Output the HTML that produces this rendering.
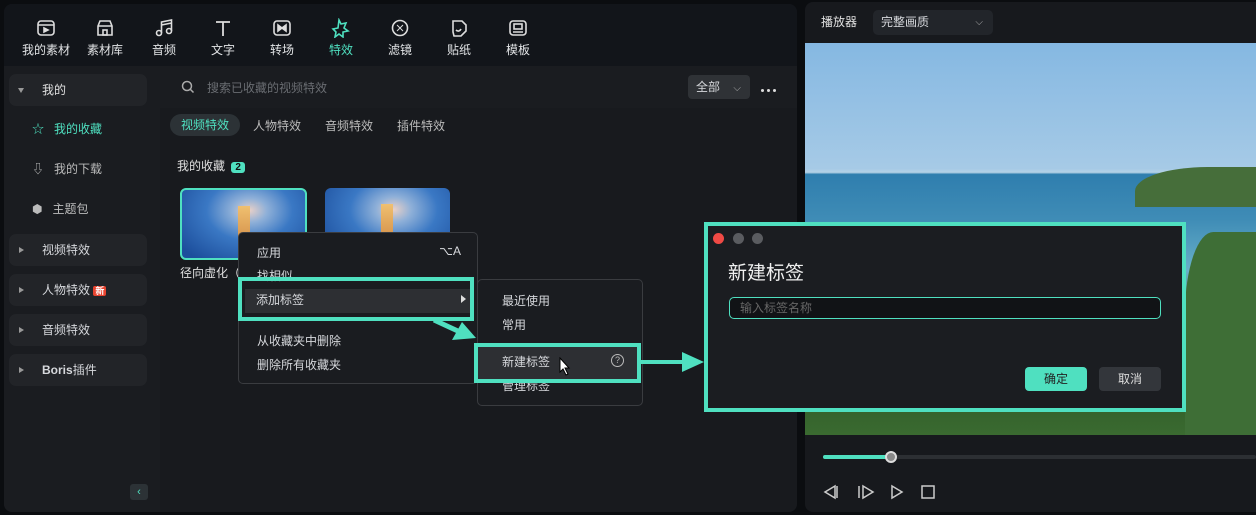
<!DOCTYPE html><html><head><meta charset="utf-8"><style>
*{margin:0;padding:0;box-sizing:border-box}
body{width:1256px;height:515px;background:#0b0d10;font-family:"Liberation Sans","Noto Sans CJK SC",sans-serif;color:#d6d8dc;position:relative;overflow:hidden;font-size:12px}
.abs{position:absolute}
.left{left:4px;top:4px;width:793px;height:508px;background:#181a1e;border-radius:8px;overflow:hidden}
.tb{left:0;top:0;width:793px;height:62px;background:#12151a}
.ti{position:absolute;top:14px;width:60px;text-align:center;font-size:12px;color:#e2e4e6}
.ti svg{display:block;margin:0 auto 3px}
.side{left:0;top:62px;width:156px;height:446px;background:#1a1c20}
.grp{position:absolute;left:5px;width:138px;height:32px;background:#222428;border-radius:7px;font-size:12px;line-height:32px}
.grp .tri{position:absolute;left:10px;top:13px;border-left:5px solid #999;border-top:3px solid transparent;border-bottom:3px solid transparent}
.grp span{position:absolute;left:33px}
.menu{background:#1a1c20;border:1px solid #3a3c40;border-radius:5px}
.hl{border:4px solid #4fe0c0}
.thumb{background:radial-gradient(ellipse at 55% 30%,#e8d0c8 0,#8fb0d8 18%,#3a78c4 45%,#1c4e9c 90%)}
</style></head><body>
<div class="abs left">
 <div class="abs tb">
  <div class="ti" style="left:12px"><svg width="20" height="20" viewBox="0 0 20 20" fill="none" stroke="#ddd" stroke-width="1.6"><rect x="2" y="3" width="16" height="14" rx="3"/><path d="M2 7h16"/><path d="M8 10l4 2-4 2z" fill="#ddd"/></svg>我的素材</div>
  <div class="ti" style="left:71px"><svg width="20" height="20" viewBox="0 0 20 20" fill="none" stroke="#ddd" stroke-width="1.6"><path d="M3 8l2-5h10l2 5v9H3z"/><path d="M3 8h14"/><rect x="8" y="12" width="4" height="5"/></svg>素材库</div>
  <div class="ti" style="left:130px"><svg width="20" height="20" viewBox="0 0 20 20" fill="none" stroke="#ddd" stroke-width="1.6"><circle cx="5" cy="15" r="2.5"/><circle cx="15" cy="13" r="2.5"/><path d="M7.5 15V4l10-2v11M7.5 7l10-2"/></svg>音频</div>
  <div class="ti" style="left:189px"><svg width="20" height="20" viewBox="0 0 20 20" fill="none" stroke="#ddd" stroke-width="1.8"><path d="M3 4h14M10 4v14"/></svg>文字</div>
  <div class="ti" style="left:248px"><svg width="20" height="20" viewBox="0 0 20 20" fill="none" stroke="#ddd" stroke-width="1.6"><rect x="2" y="3" width="16" height="14" rx="3"/><path d="M6 7l4 3-4 3zM14 7l-4 3 4 3z" fill="#ddd"/></svg>转场</div>
  <div class="ti" style="left:307px;color:#4fe0c0"><svg width="20" height="20" viewBox="0 0 20 20" fill="none" stroke="#4fe0c0" stroke-width="1.6"><path d="M8 2l2 4 5-1-2 5 4 3-5 1 0 5-4-3-4 3 1-5-3-3 5-1z"/></svg>特效</div>
  <div class="ti" style="left:366px"><svg width="20" height="20" viewBox="0 0 20 20" fill="none" stroke="#ddd" stroke-width="1.6"><circle cx="10" cy="10" r="7.5"/><path d="M7 7l6 6M13 7l-6 6" stroke-width="1"/></svg>滤镜</div>
  <div class="ti" style="left:425px"><svg width="20" height="20" viewBox="0 0 20 20" fill="none" stroke="#ddd" stroke-width="1.6"><path d="M4 3h9l4 4v6l-5 5H5l-1-4z"/><path d="M7 12c2 2 4 1 5-1"/></svg>贴纸</div>
  <div class="ti" style="left:484px"><svg width="20" height="20" viewBox="0 0 20 20" fill="none" stroke="#ddd" stroke-width="1.6"><rect x="2" y="3" width="16" height="14" rx="3"/><rect x="6" y="6" width="8" height="5"/><path d="M5 14h10"/></svg>模板</div>
 </div>
 <div class="abs side">
  <div class="grp" style="top:8px"><div class="tri" style="border-left:3px solid transparent;border-right:3px solid transparent;border-top:5px solid #999;border-bottom:0;left:9px;top:14px"></div><span style="left:33px;color:#e0e0e0">我的</span></div>
  <div class="abs" style="left:28px;top:54px;color:#4fe0c0;font-size:12px">☆&nbsp;&nbsp;&nbsp;我的收藏</div>
  <div class="abs" style="left:28px;top:94px;color:#bbb">⇩&nbsp;&nbsp;&nbsp;我的下载</div>
  <div class="abs" style="left:28px;top:134px;color:#bbb">⬢&nbsp;&nbsp;&nbsp;主题包</div>
  <div class="grp" style="top:168px"><div class="tri"></div><span>视频特效</span></div>
  <div class="grp" style="top:208px"><div class="tri"></div><span>人物特效 <b style="background:#e8432f;color:#fff;font-size:9px;padding:0 2px;border-radius:2px">新</b></span></div>
  <div class="grp" style="top:248px"><div class="tri"></div><span>音频特效</span></div>
  <div class="grp" style="top:288px"><div class="tri"></div><span style="font-weight:bold">Boris<b style="font-weight:normal">插件</b></span></div>
  <div class="abs" style="left:126px;top:418px;width:18px;height:16px;background:#2c3236;border-radius:3px;color:#4fe0c0;text-align:center;line-height:16px;font-size:11px">‹</div>
 </div>
 <div class="abs" style="left:156px;top:62px;width:637px;height:42px;background:#1a1c20"></div>
 <svg class="abs" style="left:177px;top:76px" width="14" height="14" fill="none" stroke="#aaa" stroke-width="1.5"><circle cx="6" cy="6" r="4.5"/><path d="M9.5 9.5l3 3"/></svg>
 <div class="abs" style="left:203px;top:75px;color:#6a6d72">搜索已收藏的视频特效</div>
 <div class="abs" style="left:684px;top:71px;width:62px;height:24px;background:#2f3236;border-radius:4px;line-height:24px;padding-left:8px">全部 <span style="margin-left:10px;color:#aaa;font-size:10px">⌵</span></div>
 <div class="abs" style="left:757px;top:85px;width:3px;height:3px;background:#ddd;border-radius:50%;box-shadow:6px 0 #ddd,12px 0 #ddd"></div>
 <div class="abs" style="left:166px;top:110px;width:70px;height:22px;background:#2c3236;border-radius:11px;color:#4fe0c0;text-align:center;line-height:22px">视频特效</div>
 <div class="abs" style="left:249px;top:113px;color:#bbb">人物特效</div>
 <div class="abs" style="left:321px;top:113px;color:#bbb">音频特效</div>
 <div class="abs" style="left:393px;top:113px;color:#bbb">插件特效</div>
 <div class="abs" style="left:173px;top:153px;color:#e0e0e0">我的收藏 <span style="background:#4fe0c0;color:#111;font-size:10px;padding:0 4px;border-radius:3px;font-weight:bold;margin-left:3px">2</span></div>
 <div class="abs thumb" style="left:176px;top:184px;width:127px;height:72px;border:2px solid #4fe0c0;border-radius:6px;overflow:hidden"><div style="position:absolute;left:56px;top:16px;width:12px;height:60px;background:linear-gradient(#f0c070,#c07030)"></div></div>
 <div class="abs thumb" style="left:321px;top:184px;width:125px;height:72px;border-radius:6px;overflow:hidden"><div style="position:absolute;left:56px;top:16px;width:12px;height:60px;background:linear-gradient(#f0c070,#c07030)"></div></div>
 <div class="abs" style="left:176px;top:260px;color:#e0e0e0">径向虚化（</div>
</div>
<!-- menu 1 -->
<div class="abs menu" style="left:238px;top:232px;width:240px;height:152px">
 <div class="abs" style="left:18px;top:11px">应用</div><div class="abs" style="right:16px;top:11px">⌥A</div>
 <div class="abs" style="left:18px;top:34px">找相似</div>
 <div class="abs" style="left:6px;top:56px;width:226px;height:24px;background:#2d2f33"></div>
 <div class="abs" style="left:18px;top:99px">从收藏夹中删除</div>
 <div class="abs" style="left:18px;top:123px">删除所有收藏夹</div>
</div>
<div class="abs hl" style="left:238px;top:277px;width:236px;height:44px"></div>
<div class="abs" style="left:256px;top:291px">添加标签</div>
<div class="abs" style="left:461px;top:295px;border-left:5px solid #ddd;border-top:4px solid transparent;border-bottom:4px solid transparent"></div>
<!-- menu 2 -->
<div class="abs menu" style="left:477px;top:279px;width:166px;height:127px">
 <div class="abs" style="left:24px;top:12px">最近使用</div>
 <div class="abs" style="left:24px;top:36px">常用</div>
 <div class="abs" style="left:24px;top:97px">管理标签</div>
</div>
<div class="abs hl" style="left:474px;top:343px;width:167px;height:40px;background:#2d2f33"></div>
<div class="abs" style="left:502px;top:353px">新建标签</div>
<div class="abs" style="left:611px;top:354px;width:13px;height:13px;border:1px solid #bbb;border-radius:50%;font-size:9px;text-align:center;line-height:11px;color:#bbb">?</div>
<svg class="abs" style="left:558px;top:357px" width="14" height="20" viewBox="0 0 14 20"><path d="M2 1v14l3-3 3 6 2-1-3-6h4z" fill="#fff" stroke="#000"/></svg>
<svg class="abs" style="left:430px;top:316px" width="50" height="30"><path d="M4 4l26 12" stroke="#4fe0c0" stroke-width="5"/><path d="M22 24l24-2-14-16z" fill="#4fe0c0"/></svg>
<svg class="abs" style="left:638px;top:350px" width="68" height="24"><path d="M0 12h50" stroke="#4fe0c0" stroke-width="4"/><path d="M44 2l22 10-22 10z" fill="#4fe0c0"/></svg>
<!-- right panel -->
<div class="abs" style="left:805px;top:2px;width:451px;height:510px;background:#17191d;border-radius:8px 0 0 8px;overflow:hidden">
 <div class="abs" style="left:16px;top:11px;color:#e0e0e0">播放器</div>
 <div class="abs" style="left:68px;top:8px;width:120px;height:25px;background:#22252a;border-radius:5px;padding-left:8px;line-height:25px">完整画质<span style="position:absolute;right:10px;font-size:10px;color:#aaa">⌵</span></div>
 <div class="abs" style="left:0;top:41px;width:451px;height:392px;background:linear-gradient(180deg,#85b8e2 0,#a6cae6 32%,#b4d2e6 33%,#2f7eae 33.5%,#3f8cb6 45%,#68b0c8 58%,#4a8a6a 70%,#2e5a28 85%,#3a6a30 100%)"></div>
 <div class="abs" style="left:330px;top:165px;width:121px;height:40px;background:#466e3a;border-radius:60% 0 0 0"></div>
 <div class="abs" style="left:380px;top:230px;width:71px;height:203px;background:#3e6e36;border-radius:40% 0 0 0"></div>
 <div class="abs" style="left:18px;top:453px;width:433px;height:4px;background:#2c2f33;border-radius:2px"></div>
 <div class="abs" style="left:18px;top:453px;width:68px;height:4px;background:#4fe0c0;border-radius:2px"></div>
 <div class="abs" style="left:80px;top:449px;width:12px;height:12px;background:#888;border:2px solid #ddd;border-radius:50%"></div>
 <svg class="abs" style="left:18px;top:482px" width="130" height="16" fill="none" stroke="#ccc" stroke-width="1.5"><path d="M12 2L2 8l10 6zM14 2v12"/><path d="M36 2v12M40 2l10 6-10 6z"/><path d="M69 2l10 6-10 6z"/><rect x="99" y="2" width="12" height="12"/></svg>
</div>
<!-- dialog -->
<div class="abs hl" style="left:704px;top:222px;width:482px;height:190px;background:#1b1d21"></div>
<div class="abs" style="left:713px;top:233px;width:11px;height:11px;border-radius:50%;background:#f04a45"></div>
<div class="abs" style="left:733px;top:233px;width:11px;height:11px;border-radius:50%;background:#5a5c60"></div>
<div class="abs" style="left:752px;top:233px;width:11px;height:11px;border-radius:50%;background:#5a5c60"></div>
<div class="abs" style="left:728px;top:258px;font-size:19px;color:#f0f0f0">新建标签</div>
<div class="abs" style="left:729px;top:297px;width:432px;height:22px;border:1px solid #4fe0c0;border-radius:5px;background:#111316;padding-left:10px;line-height:20px;color:#666;font-size:12px">输入标签名称</div>
<div class="abs" style="left:1025px;top:367px;width:62px;height:24px;background:#4fe0c0;border-radius:4px;color:#222;text-align:center;line-height:24px">确定</div>
<div class="abs" style="left:1099px;top:367px;width:62px;height:24px;background:#33363b;border-radius:4px;color:#ddd;text-align:center;line-height:24px">取消</div>
</body></html>
